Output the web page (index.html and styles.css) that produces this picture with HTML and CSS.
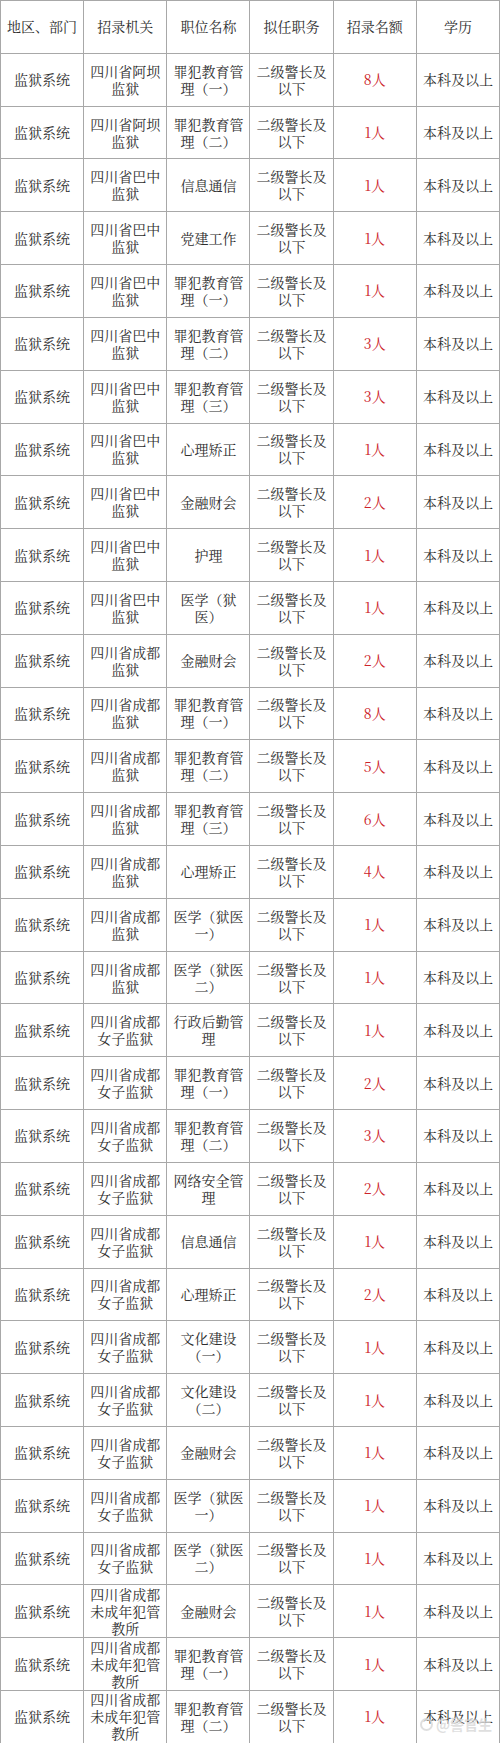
FILE: index.html
```html
<!DOCTYPE html>
<html lang="zh-CN">
<head>
<meta charset="utf-8">
<title>招录职位表</title>
<link rel="stylesheet" href="styles.css">
</head>
<body>
<div class="page">
<div class="grid">
<div class="c">地区、部门</div><div class="c">招录机关</div><div class="c">职位名称</div><div class="c">拟任职务</div><div class="c">招录名额</div><div class="c">学历</div>

<div class="c">监狱系统</div><div class="c">四川省阿坝监狱</div><div class="c">罪犯教育管理（一）</div><div class="c">二级警长及以下</div><div class="c red">8人</div><div class="c">本科及以上</div>
<div class="c">监狱系统</div><div class="c">四川省阿坝监狱</div><div class="c">罪犯教育管理（二）</div><div class="c">二级警长及以下</div><div class="c red">1人</div><div class="c">本科及以上</div>
<div class="c">监狱系统</div><div class="c">四川省巴中监狱</div><div class="c">信息通信</div><div class="c">二级警长及以下</div><div class="c red">1人</div><div class="c">本科及以上</div>
<div class="c">监狱系统</div><div class="c">四川省巴中监狱</div><div class="c">党建工作</div><div class="c">二级警长及以下</div><div class="c red">1人</div><div class="c">本科及以上</div>
<div class="c">监狱系统</div><div class="c">四川省巴中监狱</div><div class="c">罪犯教育管理（一）</div><div class="c">二级警长及以下</div><div class="c red">1人</div><div class="c">本科及以上</div>
<div class="c">监狱系统</div><div class="c">四川省巴中监狱</div><div class="c">罪犯教育管理（二）</div><div class="c">二级警长及以下</div><div class="c red">3人</div><div class="c">本科及以上</div>
<div class="c">监狱系统</div><div class="c">四川省巴中监狱</div><div class="c">罪犯教育管理（三）</div><div class="c">二级警长及以下</div><div class="c red">3人</div><div class="c">本科及以上</div>
<div class="c">监狱系统</div><div class="c">四川省巴中监狱</div><div class="c">心理矫正</div><div class="c">二级警长及以下</div><div class="c red">1人</div><div class="c">本科及以上</div>
<div class="c">监狱系统</div><div class="c">四川省巴中监狱</div><div class="c">金融财会</div><div class="c">二级警长及以下</div><div class="c red">2人</div><div class="c">本科及以上</div>
<div class="c">监狱系统</div><div class="c">四川省巴中监狱</div><div class="c">护理</div><div class="c">二级警长及以下</div><div class="c red">1人</div><div class="c">本科及以上</div>
<div class="c">监狱系统</div><div class="c">四川省巴中监狱</div><div class="c">医学（狱医）</div><div class="c">二级警长及以下</div><div class="c red">1人</div><div class="c">本科及以上</div>
<div class="c">监狱系统</div><div class="c">四川省成都监狱</div><div class="c">金融财会</div><div class="c">二级警长及以下</div><div class="c red">2人</div><div class="c">本科及以上</div>
<div class="c">监狱系统</div><div class="c">四川省成都监狱</div><div class="c">罪犯教育管理（一）</div><div class="c">二级警长及以下</div><div class="c red">8人</div><div class="c">本科及以上</div>
<div class="c">监狱系统</div><div class="c">四川省成都监狱</div><div class="c">罪犯教育管理（二）</div><div class="c">二级警长及以下</div><div class="c red">5人</div><div class="c">本科及以上</div>
<div class="c">监狱系统</div><div class="c">四川省成都监狱</div><div class="c">罪犯教育管理（三）</div><div class="c">二级警长及以下</div><div class="c red">6人</div><div class="c">本科及以上</div>
<div class="c">监狱系统</div><div class="c">四川省成都监狱</div><div class="c">心理矫正</div><div class="c">二级警长及以下</div><div class="c red">4人</div><div class="c">本科及以上</div>
<div class="c">监狱系统</div><div class="c">四川省成都监狱</div><div class="c">医学（狱医一）</div><div class="c">二级警长及以下</div><div class="c red">1人</div><div class="c">本科及以上</div>
<div class="c">监狱系统</div><div class="c">四川省成都监狱</div><div class="c">医学（狱医二）</div><div class="c">二级警长及以下</div><div class="c red">1人</div><div class="c">本科及以上</div>
<div class="c">监狱系统</div><div class="c">四川省成都女子监狱</div><div class="c">行政后勤管理</div><div class="c">二级警长及以下</div><div class="c red">1人</div><div class="c">本科及以上</div>
<div class="c">监狱系统</div><div class="c">四川省成都女子监狱</div><div class="c">罪犯教育管理（一）</div><div class="c">二级警长及以下</div><div class="c red">2人</div><div class="c">本科及以上</div>
<div class="c">监狱系统</div><div class="c">四川省成都女子监狱</div><div class="c">罪犯教育管理（二）</div><div class="c">二级警长及以下</div><div class="c red">3人</div><div class="c">本科及以上</div>
<div class="c">监狱系统</div><div class="c">四川省成都女子监狱</div><div class="c">网络安全管理</div><div class="c">二级警长及以下</div><div class="c red">2人</div><div class="c">本科及以上</div>
<div class="c">监狱系统</div><div class="c">四川省成都女子监狱</div><div class="c">信息通信</div><div class="c">二级警长及以下</div><div class="c red">1人</div><div class="c">本科及以上</div>
<div class="c">监狱系统</div><div class="c">四川省成都女子监狱</div><div class="c">心理矫正</div><div class="c">二级警长及以下</div><div class="c red">2人</div><div class="c">本科及以上</div>
<div class="c">监狱系统</div><div class="c">四川省成都女子监狱</div><div class="c">文化建设（一）</div><div class="c">二级警长及以下</div><div class="c red">1人</div><div class="c">本科及以上</div>
<div class="c">监狱系统</div><div class="c">四川省成都女子监狱</div><div class="c">文化建设（二）</div><div class="c">二级警长及以下</div><div class="c red">1人</div><div class="c">本科及以上</div>
<div class="c">监狱系统</div><div class="c">四川省成都女子监狱</div><div class="c">金融财会</div><div class="c">二级警长及以下</div><div class="c red">1人</div><div class="c">本科及以上</div>
<div class="c">监狱系统</div><div class="c">四川省成都女子监狱</div><div class="c">医学（狱医一）</div><div class="c">二级警长及以下</div><div class="c red">1人</div><div class="c">本科及以上</div>
<div class="c">监狱系统</div><div class="c">四川省成都女子监狱</div><div class="c">医学（狱医二）</div><div class="c">二级警长及以下</div><div class="c red">1人</div><div class="c">本科及以上</div>
<div class="c">监狱系统</div><div class="c">四川省成都未成年犯管教所</div><div class="c">金融财会</div><div class="c">二级警长及以下</div><div class="c red">1人</div><div class="c">本科及以上</div>
<div class="c">监狱系统</div><div class="c">四川省成都未成年犯管教所</div><div class="c">罪犯教育管理（一）</div><div class="c">二级警长及以下</div><div class="c red">1人</div><div class="c">本科及以上</div>
<div class="c">监狱系统</div><div class="c">四川省成都未成年犯管教所</div><div class="c">罪犯教育管理（二）</div><div class="c">二级警长及以下</div><div class="c red">1人</div><div class="c">本科及以上</div>
</div>
<div class="mark"><span class="mark-icon"></span>@警官生</div>
</div>
</body>
</html>
```
FILE: styles.css
```css
html, body {
  margin: 0;
  padding: 0;
  background: #fff;
}
.page {
  position: relative;
  width: 500px;
  height: 1743px;
  overflow: hidden;
}
.grid {
  display: grid;
  grid-template-columns: repeat(6, 1fr);
  grid-auto-rows: 52.82px;
  width: 500px;
  box-sizing: border-box;
  border-left: 1px solid #a8a8a8;
  border-top: 1px solid #a8a8a8;
  font-family: "Noto Serif CJK SC", "Liberation Serif", "Noto Sans CJK SC", serif;
  font-size: 14px;
  line-height: 17px;
  color: #2e2e2e;
}
.c {
  display: flex;
  align-items: center;
  justify-content: center;
  text-align: center;
  padding: 0 4px;
  border-right: 1px solid #a8a8a8;
  border-bottom: 1px solid #a8a8a8;
  box-sizing: border-box;
  min-width: 0;
}
.red {
  color: #cc2229;
}
.mark {
  position: absolute;
  right: 8px;
  bottom: 9px;
  display: flex;
  align-items: center;
  gap: 3px;
  font-family: "Noto Sans CJK SC", sans-serif;
  font-size: 14px;
  font-weight: 700;
  color: rgba(215, 215, 215, 0.8);
}
.mark-icon {
  width: 13px;
  height: 13px;
  border-radius: 50%;
  border: 2px solid rgba(215, 215, 215, 0.8);
  box-sizing: border-box;
}
```
